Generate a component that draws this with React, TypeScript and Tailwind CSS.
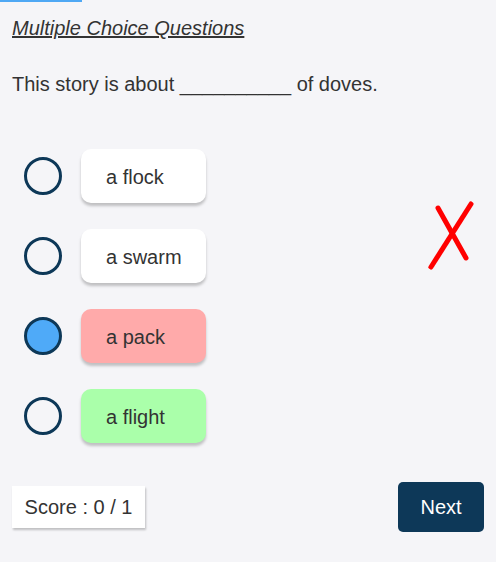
import React from "react";

const options = [
  { label: "a flock", bg: "bg-white", selected: false },
  { label: "a swarm", bg: "bg-white", selected: false },
  { label: "a pack", bg: "bg-[#ffaaaa]", selected: true },
  { label: "a flight", bg: "bg-[#aaffaa]", selected: false },
];

export default function App() {
  return (
    <div
      className="w-[496px] h-[562px] bg-[#f5f5f8] text-[#333333] text-[20px] overflow-hidden"
      style={{ fontFamily: '"Liberation Sans", Arial, sans-serif' }}
    >
      <div className="h-[2px] w-[82px] bg-[#4fa8f4]" />
      <div className="px-3 pt-[15px]">
        <div className="italic underline leading-[23px]">Multiple Choice Questions</div>
        <div className="mt-[33px] leading-[23px]">This story is about __________ of doves.</div>
        <div className="relative mt-[53px] flex flex-col gap-[26px]">
          {options.map((o) => (
            <div key={o.label} className="flex items-center">
              <div
                className={`ml-3 w-[38px] h-[38px] rounded-full border-[3px] border-[#0d3858] ${
                  o.selected ? "bg-[#4faaf8]" : "bg-transparent"
                }`}
              />
              <div
                className={`ml-[19px] w-[125px] h-[54px] rounded-[10px] ${o.bg} pl-[25px] pt-[3px] flex items-center leading-[23px] shadow-[0_3px_3px_rgba(0,0,0,0.22)]`}
              >
                {o.label}
              </div>
            </div>
          ))}
          <svg
            className="absolute left-[406px] top-[52px]"
            width="60"
            height="72"
            viewBox="0 0 60 72"
          >
            <g stroke="#ff0000" strokeWidth="5" strokeLinecap="round" fill="none">
              <line x1="20" y1="7" x2="48" y2="57" />
              <line x1="53" y1="3" x2="13" y2="66" />
            </g>
          </svg>
        </div>
        <div className="mt-[39px] flex items-center justify-between">
          <div className="bg-white w-[133px] h-[42px] flex items-center justify-center leading-[23px] shadow-[1px_2px_2px_rgba(0,0,0,0.22)]">
            Score : 0 / 1
          </div>
          <button className="bg-[#0d3858] text-white w-[86px] h-[50px] rounded-[5px] flex items-center justify-center leading-[23px]">
            Next
          </button>
        </div>
      </div>
    </div>
  );
}
